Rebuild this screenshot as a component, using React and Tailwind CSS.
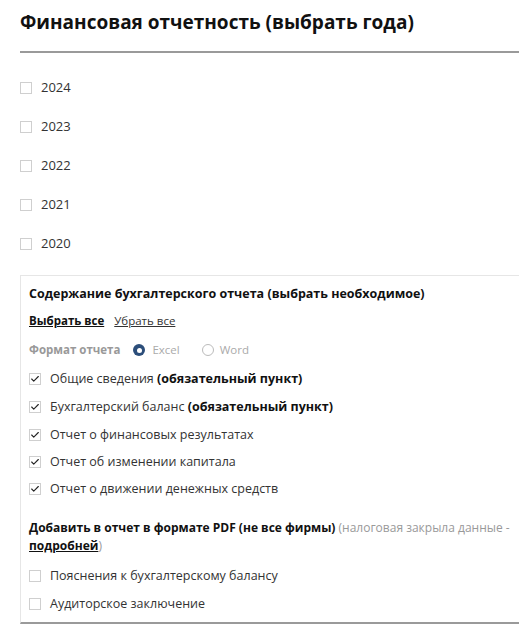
import { Check } from 'lucide-react';

const years = ['2024', '2023', '2022', '2021', '2020'];

const reports = [
  { label: 'Общие сведения', extra: '(обязательный пункт)' },
  { label: 'Бухгалтерский баланс', extra: '(обязательный пункт)' },
  { label: 'Отчет о финансовых результатах' },
  { label: 'Отчет об изменении капитала' },
  { label: 'Отчет о движении денежных средств' },
];

const pdfItems = ['Пояснения к бухгалтерскому балансу', 'Аудиторское заключение'];

const Box = ({ checked }) => (
  <span className="w-3 h-3 border border-[#cfcfcf] bg-white flex items-center justify-center shrink-0">
    {checked && <Check size={10} strokeWidth={2.6} className="text-[#222]" />}
  </span>
);

export default function App() {
  return (
    <div className="bg-white text-[#222] pl-5 pt-[9px] font-['Open_Sans',sans-serif] h-[625px] overflow-hidden">
      <h1 className="text-[19px] font-bold leading-[26px] text-[#111]">
        Финансовая отчетность (выбрать года)
      </h1>
      <div className="mt-[16px] border-t-2 border-[#9a9a9a]" />

      {/* Years */}
      <div className="flex flex-col gap-[21px] pt-[26px]">
        {years.map(y => (
          <label key={y} className="flex items-center gap-[9px] h-[18px] text-[13px] text-[#333]">
            <Box />
            {y}
          </label>
        ))}
      </div>

      {/* Report contents panel */}
      <div className="mt-[22px] border-t border-l border-[#e6e6e6] border-b-2 border-b-[#9a9a9a] pl-2 pt-[9px] pb-[9px] text-[12.5px]">
        <div className="font-bold text-[#111] leading-[18px]">
          Содержание бухгалтерского отчета (выбрать необходимое)
        </div>

        <div className="flex gap-[10px] mt-[9px] leading-[18px] text-[11.5px]">
          <a className="font-bold underline text-[#111]">Выбрать все</a>
          <a className="underline text-[#333]">Убрать все</a>
        </div>

        <div className="flex items-center mt-[11px] leading-[18px] text-[11.5px] text-[#999]">
          <span className="font-bold mr-[13px]">Формат отчета</span>
          <span className="w-3 h-3 rounded-full bg-[#2c4e7a] flex items-center justify-center mr-[7px]">
            <span className="w-[5px] h-[5px] rounded-full bg-white" />
          </span>
          <span className="mr-[22px] text-[#aaa]">Excel</span>
          <span className="w-3 h-3 rounded-full border border-[#bbb] mr-[6px]" />
          <span className="text-[#aaa]">Word</span>
        </div>

        <div className="flex flex-col gap-[10px] mt-[11px]">
          {reports.map((r, i) => (
            <label key={r.label} className={`flex items-center gap-[9px] leading-[18px] text-[#333] ${i > 2 ? '-mt-px' : ''}`}>
              <Box checked />
              <span>
                {r.label}
                {r.extra && <b className="text-[#111]"> {r.extra}</b>}
              </span>
            </label>
          ))}
        </div>

        <p className="mt-[21px] leading-[18px] text-[12px] text-[#111]">
          <b>Добавить в отчет в формате PDF (не все фирмы)</b>{' '}
          <span className="text-[#999]">(налоговая закрыла данные -</span>
          <br />
          <b className="underline">подробней</b>
          <span className="text-[#999]">)</span>
        </p>

        <div className="flex flex-col gap-[10px] mt-[12px]">
          {pdfItems.map(t => (
            <label key={t} className="flex items-center gap-[9px] leading-[18px] text-[#333]">
              <Box />
              {t}
            </label>
          ))}
        </div>
      </div>
    </div>
  );
}
